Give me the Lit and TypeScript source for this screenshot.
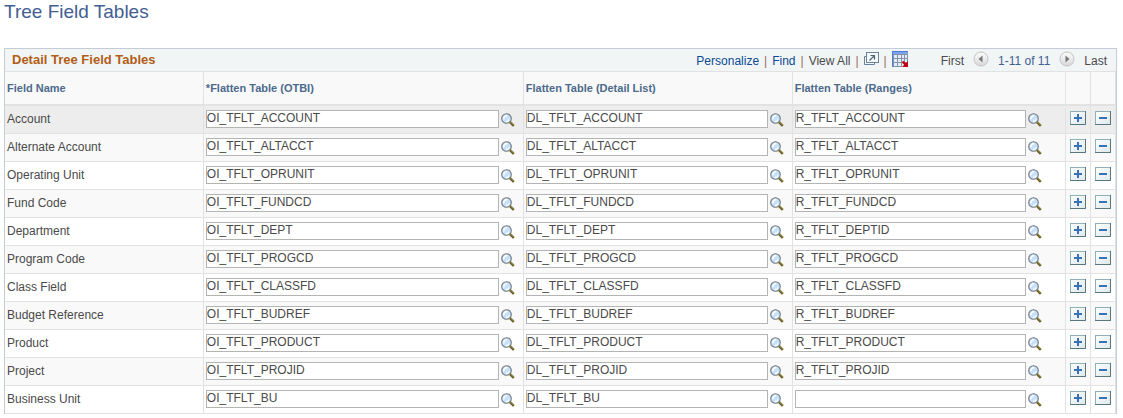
import { LitElement, html, css } from "lit";
import { customElement, state } from "lit/decorators.js";

interface FieldRow {
  name: string;
  otbi: string;
  detail: string;
  range: string;
}

const row = (name: string, code: string, rangeCode = code): FieldRow => ({
  name,
  otbi: `OI_TFLT_${code}`,
  detail: `DL_TFLT_${code}`,
  range: rangeCode ? `R_TFLT_${rangeCode}` : "",
});

const ROWS: FieldRow[] = [
  row("Account", "ACCOUNT"),
  row("Alternate Account", "ALTACCT"),
  row("Operating Unit", "OPRUNIT"),
  row("Fund Code", "FUNDCD"),
  row("Department", "DEPT", "DEPTID"),
  row("Program Code", "PROGCD"),
  row("Class Field", "CLASSFD"),
  row("Budget Reference", "BUDREF"),
  row("Product", "PRODUCT"),
  row("Project", "PROJID"),
  row("Business Unit", "BU", ""),
];

const lookupIcon = html`<svg width="14" height="14" viewBox="0 0 14 14" aria-hidden="true">
  <path d="M8.8 8.8 12.8 12.8" stroke="#5e5a20" stroke-width="2.4" />
  <path d="M9.2 8.6 12.6 12" stroke="#b0a848" stroke-width="1" />
  <circle cx="5.5" cy="5.5" r="4.8" fill="#c6e1fb" stroke="#74787e" stroke-width="1.1" />
  <path d="M2.8 6.4a3 3 0 0 1 3.4-3.6M5 8.4a3 3 0 0 0 3-2" fill="none" stroke="#fff" stroke-width="1.5" />
</svg>`;

const signIcon = (plus: boolean) => html`<svg width="16" height="14" viewBox="0 0 16 14" aria-hidden="true">
  <defs>
    <linearGradient id="face" x1="0" y1="0" x2="1" y2="1">
      <stop offset="0" stop-color="#fff" /><stop offset="1" stop-color="#dde8ec" />
    </linearGradient>
  </defs>
  <rect x=".5" y=".5" width="15" height="13" fill="url(#face)" stroke="#8fb0b8" />
  <path d="M15.5 0v13.5H0" fill="none" stroke="#587880" />
  <path d=${plus ? "M4 7h8M8 3v8" : "M4 7h8"} stroke="#3873b8" stroke-width="2" />
</svg>`;

const popupIcon = html`<svg width="15" height="14" viewBox="0 0 15 14" aria-hidden="true">
  <path d="M2.5 4.5h-2v8h10v-2" fill="none" stroke="#6b8299" />
  <rect x="2.5" y=".5" width="12" height="10" fill="#f4f9fc" stroke="#6b8299" />
  <path d="M5.5 8.5 10.5 3.5M6.5 3.5h4v4" fill="none" stroke="#4f6478" stroke-width="1.2" />
</svg>`;

const gridIcon = html`<svg width="16" height="16" viewBox="0 0 16 16" aria-hidden="true">
  <rect width="16" height="16" fill="#8492a8" />
  <path d="M0 0h16v3H0z" fill="#7ba3ee" />
  <path d="M0 0h1v16H0zM0 0h16v1H0z" fill="#4f7cd6" />
  <path d="M2 4h3v3H2zm4 0h3v3H6zm4 0h2v3h-2zm3 0h2v3h-2zM2 8h3v3H2zm4 0h3v3H6zm4 0h2v3h-2zm3 0h2v3h-2zM2 12h3v3H2zm4 0h3v3H6z" fill="#e6ecf5" />
  <path d="M10 12h6v4h-6z" fill="#e6ecf5" />
  <path d="M10.5 10.5 14 14" stroke="#c00010" stroke-width="2.4" />
  <path d="M16 10v6h-6z" fill="#c00010" />
</svg>`;

const arrowIcon = (next: boolean) => html`<svg width="16" height="16" viewBox="0 0 16 16" aria-hidden="true">
  <defs>
    <linearGradient id="disc" x1="0" y1="0" x2="0" y2="1">
      <stop offset="0" stop-color="#fdfdfd" /><stop offset="1" stop-color="#d8d8d8" />
    </linearGradient>
  </defs>
  <circle cx="8" cy="8" r="7" fill="url(#disc)" stroke="#c2c2c2" />
  <path d=${next ? "M6.5 4.5v7l4-3.5z" : "M9.5 4.5v7l-4-3.5z"} fill="#777" />
</svg>`;

@customElement("app-root")
export class AppRoot extends LitElement {
  @state() private rows = ROWS;

  static styles = css`
    :host {
      display: block;
      padding: 0 6px 4px 4px;
      font: 12px/16px "Liberation Sans", Arial, sans-serif;
      color: #4a4a4a;
      background: #fff;
    }
    h1 {
      margin: 0;
      padding-bottom: 24px;
      font-size: 19px;
      line-height: 24px;
      font-weight: normal;
      color: #426092;
    }
    .panel {
      border: 1px solid #c5ccd5;
      border-bottom: 0;
    }
    .bar {
      display: flex;
      align-items: center;
      justify-content: space-between;
      height: 22px;
      padding: 0 9px 0 7px;
      background: #f1f5f6;
      white-space: nowrap;
    }
    h2 {
      margin: 0;
      font-size: 13px;
      line-height: 16px;
      color: #b25e16;
    }
    .tools,
    .pager {
      display: flex;
      align-items: center;
    }
    .tools {
      gap: 5px;
      padding-top: 2px;
    }
    .pager {
      gap: 9px;
      padding-left: 28px;
    }
    a {
      color: #0a4a94;
      text-decoration: none;
    }
    .plain {
      color: #4a4a4a;
    }
    .count {
      color: #426092;
    }
    .divider {
      color: #9a6a5c;
    }
    button {
      display: block;
      padding: 0;
      border: 0;
      background: none;
      cursor: pointer;
    }
    svg {
      display: block;
    }
    .lift {
      padding-bottom: 5px;
    }
    table {
      width: 100%;
      table-layout: fixed;
      border-collapse: separate;
      border-spacing: 0;
    }
    .name-col {
      width: 17.9%;
    }
    .otbi-col {
      width: 28.8%;
    }
    .detail-col {
      width: 24.2%;
    }
    .action-col {
      width: 25px;
    }
    th,
    td {
      box-sizing: border-box;
      padding: 0 2px;
      border-right: 1px solid #e2e2e2;
      border-bottom: 1px solid #e2e2e2;
      text-align: left;
    }
    th {
      height: 35px;
      border-top: 1px solid #e2e2e2;
      border-bottom-width: 2px;
      background: #f9f9f9;
      font-size: 11px;
      color: #4c6a8c;
    }
    td {
      height: 28px;
      padding-bottom: 2px;
    }
    tr:nth-child(even) td {
      background: #f9f9f9;
    }
    tr:first-child td {
      background: #ededed;
    }
    .field {
      display: flex;
      align-items: center;
      gap: 2px;
      padding-right: 6px;
    }
    .wide {
      padding-right: 21px;
    }
    input {
      box-sizing: border-box;
      flex: 1;
      min-width: 0;
      height: 18px;
      margin: 0;
      padding: 0 0 1px;
      border: 1px solid #b4b4b4;
      border-radius: 0;
      background: #fff;
      font: inherit;
      color: #4a4a4a;
    }
    .lookup {
      padding-top: 2px;
    }
    .action button {
      margin: 0 auto;
      padding-bottom: 2px;
    }
  `;

  private field(label: string, value: string, wide = false) {
    return html`<td>
      <div class="field ${wide ? "wide" : ""}">
        <input type="text" aria-label=${label} .value=${value} />
        <button class="lookup" aria-label="Look up ${label}">${lookupIcon}</button>
      </div>
    </td>`;
  }

  render() {
    return html`
      <h1>Tree Field Tables</h1>
      <section class="panel">
        <div class="bar">
          <h2>Detail Tree Field Tables</h2>
          <div class="tools">
            <a href="#">Personalize</a><span class="divider">|</span>
            <a href="#">Find</a><span class="divider">|</span>
            <a class="plain" href="#">View All</a><span class="divider">|</span>
            <button class="lift" aria-label="Open in new window">${popupIcon}</button><span class="divider">|</span>
            <button class="lift" aria-label="Download">${gridIcon}</button>
            <div class="pager">
              <span>First</span>
              <button class="lift" aria-label="Previous">${arrowIcon(false)}</button>
              <span class="count">1-11 of 11</span>
              <button class="lift" aria-label="Next">${arrowIcon(true)}</button>
              <span>Last</span>
            </div>
          </div>
        </div>
        <table>
          <colgroup>
            <col class="name-col" />
            <col class="otbi-col" />
            <col class="detail-col" />
            <col />
            <col class="action-col" />
            <col class="action-col" />
          </colgroup>
          <thead>
            <tr>
              <th>Field Name</th>
              <th>*Flatten Table (OTBI)</th>
              <th>Flatten Table (Detail List)</th>
              <th>Flatten Table (Ranges)</th>
              <th></th>
              <th></th>
            </tr>
          </thead>
          <tbody>
            ${this.rows.map(
              (r) => html`<tr>
                <td>${r.name}</td>
                ${this.field(`${r.name} flatten table (OTBI)`, r.otbi)}
                ${this.field(`${r.name} flatten table (detail list)`, r.detail)}
                ${this.field(`${r.name} flatten table (ranges)`, r.range, true)}
                <td class="action"><button aria-label="Add row">${signIcon(true)}</button></td>
                <td class="action"><button aria-label="Delete row">${signIcon(false)}</button></td>
              </tr>`
            )}
          </tbody>
        </table>
      </section>
    `;
  }
}
